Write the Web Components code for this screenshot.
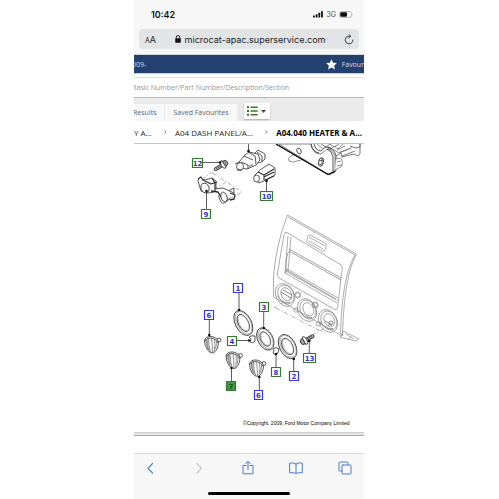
<!DOCTYPE html>
<html lang="en">
<head>
<meta charset="utf-8">
<title>Microcat</title>
<style>
    html, body {
        margin: 0;
        height: 100%;
        background: #fff;
    }
    body {
        font-family: "Open Sans", "Noto Sans", sans-serif;
        color: #222;
    }
</style>
</head>
<body>

<phone-screen>
    <status-bar slot="top" time="10:42" network="3G"></status-bar>
    <address-bar slot="top">microcat-apac.superservice.com</address-bar>

    <vehicle-header>009-<span slot="action">Favour</span></vehicle-header>
    <part-search hint="Basic Number/Part Number/Description/Section"></part-search>
    <result-tabs>
        <tab-button>Results</tab-button>
        <tab-button>Saved Favourites</tab-button>
    </result-tabs>
    <crumb-trail>
        <crumb-item>Y A...</crumb-item>
        <crumb-item>A04 DASH PANEL/A...</crumb-item>
        <crumb-item current>A04.040 HEATER &amp; A...</crumb-item>
    </crumb-trail>
    <parts-diagram></parts-diagram>

    <browser-toolbar slot="bottom"></browser-toolbar>
</phone-screen>

<script>
function define(name, template, setup) {
    customElements.define(name, class extends HTMLElement {
        constructor() {
            super()
            const shadow = this.attachShadow({ mode: "open" });
            shadow.innerHTML = template
        }

        connectedCallback() {
            if(setup) setup(this, this.shadowRoot)
        }
    })
}

define('phone-screen', /*html*/`
<style>
    :host {
        display: grid;
        grid-template-columns: 134fr 230fr 135fr;
        min-height: 100vh;
    }
    .phone {
        grid-column: 2;
        display: flex;
        flex-direction: column;
        overflow: hidden;
        background: #fff;
    }
    .top {
        background: #f7f7f8;
        border-bottom: 1px solid #d5d8dd;
    }
    main {
        flex: 1;
        display: flex;
        flex-direction: column;
    }
</style>
<div class="phone">
    <div class="top"><slot name="top"></slot></div>
    <main><slot></slot></main>
    <slot name="bottom"></slot>
</div>
`)

define('status-bar', /*html*/`
<style>
    :host {
        display: flex;
        align-items: center;
        height: 28px;
        padding: 0 10px 0 17px;
        gap: 3px;
        font-family: Inter, "Liberation Sans", sans-serif;
        color: #111;
    }
    time {
        flex: 1;
        font-size: 9px;
        font-weight: 600;
    }
    .net {
        font-size: 7px;
        color: #555;
    }
</style>
<time></time>
<svg width="10" height="7" viewBox="0 0 10 7" fill="#111">
    <rect x="0" y="4.5" width="1.8" height="2" rx=".5"/>
    <rect x="2.7" y="3.3" width="1.8" height="3.2" rx=".5"/>
    <rect x="5.4" y="1.8" width="1.8" height="4.7" rx=".5"/>
    <rect x="8.1" y="0" width="1.8" height="6.5" rx=".5"/>
</svg>
<span class="net"></span>
<svg width="15" height="7" viewBox="0 0 15 7">
    <rect x=".5" y=".5" width="12" height="6" rx="1.8" fill="none" stroke="#a5a5a5" stroke-width=".7"/>
    <rect x="1.3" y="1.2" width="6.7" height="4.6" rx="1" fill="#111"/>
    <path d="M13.5 2.5q1 1 0 2z" fill="#999"/>
</svg>
`, (el, root) => {
    root.querySelector('time').textContent = el.getAttribute('time')
    root.querySelector('.net').textContent = el.getAttribute('network')
})

define('address-bar', /*html*/`
<style>
    :host {
        display: flex;
        align-items: center;
        height: 20px;
        margin: 1px 5px 5px;
        padding: 0 5px 0 6px;
        border-radius: 4px;
        background: #e3e4e6;
        font-family: Inter, "Liberation Sans", sans-serif;
        color: #222;
    }
    button {
        border: 0;
        padding: 0;
        background: none;
        font: inherit;
        color: inherit;
        display: flex;
        align-items: baseline;
    }
    .size { font-size: 9px; }
    .size small { font-size: 7px; }
    .url {
        flex: 1;
        display: flex;
        justify-content: center;
        align-items: center;
        gap: 4px;
        font-size: 9px;
        white-space: nowrap;
    }
</style>
<button class="size" aria-label="Text size"><small>A</small>A</button>
<div class="url">
    <svg width="6" height="8" viewBox="0 0 6 8">
        <rect x=".2" y="3.2" width="5.6" height="4.5" rx=".8" fill="#111"/>
        <path d="M1.3 3.5V2.2a1.7 1.7 0 0 1 3.4 0v1.3" fill="none" stroke="#111" stroke-width=".9"/>
    </svg>
    <span><slot></slot></span>
</div>
<button aria-label="Reload">
    <svg width="10" height="11" viewBox="0 0 10 11" fill="none" stroke="#333" stroke-width=".9" stroke-linecap="round">
        <path d="M8.8 6A3.8 3.8 0 1 1 5 2.2h1.4M4.8.4l1.9 1.8-1.9 1.9"/>
    </svg>
</button>
`)

define('vehicle-header', /*html*/`
<style>
    :host {
        display: flex;
        align-items: center;
        height: 18px;
        background: #24406f;
        color: #d3dceb;
        font-size: 7px;
        border-bottom: 1px solid #c9ced6;
        white-space: nowrap;
    }
    .vehicle {
        flex: 1;
        margin-left: -2px;
    }
    a {
        display: flex;
        align-items: center;
        gap: 5px;
        color: inherit;
        text-decoration: none;
    }
</style>
<span class="vehicle"><slot></slot></span>
<a href="#favourites">
    <svg width="11" height="11" viewBox="0 0 11 11">
        <path d="M5.5.2l1.6 3.5 3.8.4-2.8 2.6.8 3.8-3.4-1.9-3.4 1.9.8-3.8L.1 4.1l3.8-.4z" fill="#fff"/>
    </svg>
    <slot name="action"></slot>
</a>
`)

define('part-search', /*html*/`
<style>
    :host {
        display: flex;
        height: 20px;
        padding-top: 3px;
        border-bottom: 1px solid #b4b4b4;
        background: #fff;
    }
    input {
        flex: 1;
        min-width: 0;
        border: 0;
        border-top: 1px solid #e2e2e2;
        padding: 0;
        margin-left: -2px;
        outline: 0;
        background: #fff;
        font: 7px "Open Sans", sans-serif;
    }
    input::placeholder {
        color: #959595;
        opacity: 1;
    }
</style>
<input type="text" aria-label="Search parts">
`, (el, root) => {
    root.querySelector('input').placeholder = el.getAttribute('hint')
})

define('result-tabs', /*html*/`
<style>
    :host {
        display: flex;
        align-items: flex-end;
        gap: 1px;
        height: 23px;
        background: #ebebec;
        overflow: hidden;
    }
    ::slotted(:first-child) { margin-left: -9px; }
    .list {
        display: flex;
        align-items: center;
        justify-content: center;
        gap: 3px;
        width: 26px;
        height: 16px;
        margin: 0 0 2px 6px;
        padding: 0;
        border: 0;
        border-radius: 1px;
        background: #fff;
        box-shadow: 0 1px 2px #aaa;
    }
</style>
<slot></slot>
<button class="list" aria-label="List view">
    <svg width="11" height="10" viewBox="0 0 11 10" fill="#3d7a22">
        <path d="M0 .3h2v2H0zM0 4h2v2H0zM0 7.700h2v2H0zM3.500.6h7.200V2H3.500zM3.500 4.300h7.200v1.400H3.500zM3.500 8h7.200v1.400H3.500z"/>
    </svg>
    <svg width="5" height="3" viewBox="0 0 5 3"><path d="M0 0h5L2.500 3z" fill="#444"/></svg>
</button>
`)

define('tab-button', /*html*/`
<style>
    :host { display: block; }
    button {
        height: 17px;
        padding: 0 8px;
        border: 0;
        background: #f8f8f8;
        color: #666;
        font: 7px "Open Sans", sans-serif;
        white-space: nowrap;
    }
</style>
<button><slot></slot></button>
`)

define('crumb-trail', /*html*/`
<style>
    :host {
        display: flex;
        align-items: center;
        justify-content: space-between;
        height: 22px;
        padding-right: 2px;
        background: #fff;
        border-bottom: 1px solid #c4c4c4;
    }
</style>
<slot></slot>
`)

define('crumb-item', /*html*/`
<style>
    :host {
        display: flex;
        align-items: center;
        gap: 12px;
        font-size: 8px;
        white-space: nowrap;
        color: #222;
    }
    :host([current]) {
        font-weight: 700;
        color: #000;
    }
    :host([current]) svg { display: none; }
    a {
        color: inherit;
        text-decoration: none;
    }
</style>
<a href="#section"><slot></slot></a>
<svg width="3" height="4" viewBox="0 0 3 4"><path d="M.6.4L2.200 2 .6 3.600" fill="none" stroke="#555" stroke-width=".7"/></svg>
`)

// number, left, top, width, colour and leader line of each callout
const callouts = [
    ['12', 192.5, 157.5, 10, 'green', 'M203 161.5H220'],
    ['9', 201.5, 208.5, 9, 'green', 'M206.5 208V190'],
    ['10', 260.5, 190.5, 12, 'green', 'M266.5 190V180'],
    ['1', 233.5, 282.5, 9, 'blue', 'M239 292V309'],
    ['3', 259.5, 301.5, 9, 'green', 'M263.7 311V327'],
    ['6', 204.5, 309.5, 9, 'blue', 'M209.3 319V334'],
    ['4', 227.5, 335.5, 9, 'green', 'M237 339.5H249'],
    ['7', 226.5, 380.5, 9, 'picked', 'M231.5 380V367'],
    ['8', 271.5, 366.5, 9, 'green', 'M276 366V353'],
    ['2', 289.5, 370.5, 9, 'blue', 'M293.7 370V358'],
    ['6', 254.5, 389.5, 8, 'blue', 'M259.3 389V376'],
    ['13', 303.5, 352.5, 12, 'green', 'M309.3 352V340']
]

const drawCallout = ([number, x, y, width, kind, leader]) => {
    const end = leader.match(/H(\d+)/)
    const [, sx, sy] = leader.match(/M([\d.]+) ([\d.]+)/)
    const tip = end ? [end[1], sy] : [sx, leader.match(/V([\d.]+)/)[1]]
    return `
    <a href="#part-${number}" class="${kind}">
        <path class="leader" d="${leader}"/>
        <circle cx="${tip[0]}" cy="${tip[1]}" r="1.3" fill="#111"/>
        <rect x="${x}" y="${y}" width="${width}" height="9"/>
        <text x="${x + width / 2}" y="${y + 7}">${number}</text>
    </a>`
}

const drawRing = (x, y, rx, ry) => `
    <g transform="translate(${x} ${y}) rotate(-28)" class="dark">
        <ellipse rx="${rx}" ry="${ry}" fill="#eee"/>
        <ellipse rx="${rx - 1.3}" ry="${ry - 1.2}" stroke="#777" stroke-width=".5" cx=".5"/>
        <ellipse rx="${rx - 3}" ry="${ry - 4.2}"/>
        <ellipse rx="${rx - 3.8}" ry="${ry - 5}" stroke="#777" stroke-width=".4" cx=".4"/>
    </g>`

const drawKnob = (x, y) => `
    <g transform="translate(${x} ${y})" class="dark">
        <circle cx="7.500" cy="-4" r="1.900"/>
        <path d="M4-5l2 0M5-1l1.500-1.500"/>
        <path d="M-7-4C-6-9 5-9 7-2 7 3 5 7 2 9Q-2 9-4 6-7 2-7-4z"/>
        <path d="M-6-4Q-6 2-3 6L-1 7Q-4 1-3-6z" fill="#bbb" stroke="none"/>
        <path d="M-7-3Q-4-7 0-6 5-5 6.500-1" fill="none"/>
        <path d="M-3-6Q-3 2-1 8M0-6Q1 2 1 8.500M-5-5Q-5 1-3 6M3-5Q4 1 2.500 8M5-3Q5 2 4 5" fill="none" stroke="#666" stroke-width=".7"/>
    </g>`

const drawScrew = (x, y, angle) => `
    <g transform="translate(${x} ${y}) rotate(${angle})" class="dark">
        <path d="M2-1.500H10.500L11.500 0l-1 1.500H2M4-1.500l1 3M6-1.500l1 3M8-1.500l1 3" fill="#bbb"/>
        <ellipse rx="2" ry="4.300" cx="1"/>
        <path d="M0-3L-3-2.500-4 0-3 2.500 0 3z" fill="#999"/>
    </g>`

const drawDial = (x, y) => `
    <g transform="translate(${x} ${y}) rotate(-28)">
        <ellipse rx="9" ry="12"/>
        <ellipse rx="7.500" ry="10" cx="1"/>
        <ellipse rx="5" ry="7" cx="1.500"/>
        <path d="M-7-3Q-7 7 1 9" stroke-width=".8"/>
    </g>`

define('parts-diagram', /*html*/`
<style>
    :host {
        display: flex;
        flex-direction: column;
        flex: 1;
        background: #fff;
    }
    svg {
        display: block;
        width: 100%;
        flex: 1;
        min-height: 0;
    }
    footer {
        height: 2px;
        margin-bottom: 17px;
        background: #e6e6e6;
        border-top: 1px solid #cfcfcf;
        border-bottom: 1px solid #aaa;
    }
    g, path, ellipse, circle { stroke-linejoin: round; }
    .light {
        fill: none;
        stroke: #8a8a8a;
        stroke-width: .7;
    }
    .dark {
        fill: #fff;
        stroke: #2d2d2d;
        stroke-width: .8;
    }
    .leader {
        fill: none;
        stroke: #333;
        stroke-width: .8;
    }
    .dash { stroke-dasharray: 4 2 1 2; }
    .callouts text {
        font: bold 7px "DejaVu Sans", sans-serif;
        text-anchor: middle;
        fill: #3535c8;
    }
    .callouts rect {
        fill: #fff;
        stroke-width: 1.2;
    }
    .green rect { stroke: #357a2c; }
    .blue rect { stroke: #3535e0; }
    .picked rect { fill: #459545; stroke: #2f7a2f; }
    .callouts .picked text { fill: #175a22; }
    .copyright {
        font: 5px "Liberation Sans", sans-serif;
        fill: #000;
    }
</style>
<svg viewBox="134 143 230 288" preserveAspectRatio="xMidYMin meet">
    <!-- heater housing -->
    <g class="dark">
        <path d="M301 151l-10 4q-4 2-2 5 3 2 8 0l12-3" stroke="#777"/>
        <path d="M311 143q1 10 10 10l6-5q5 0 8 7v16l-6 3L279 143z" stroke="#666"/>
        <path d="M276 143l52 30.500 8-4v-15q-2-7-8-8M333 171v-15q-1-6-6-8" fill="none"/>
        <path d="M276 143l52 30.500 7-3" fill="none" stroke="#111" stroke-width="1.300"/>
        <path d="M311 143q2 8 8 9M314 143q2 7 7 7 5-7 11-2" fill="none"/>
        <path d="M317 143l6 5 3-3 4 4 4-4 4 3 5-5" fill="none" stroke="#777"/>
        <path d="M321 143l5 3 4-3 4 3 5-3M337 149l8-4M340 151l11-4M333 148l6 4 13-5" fill="none" stroke="#666"/>
        <path d="M336 155l5-3 1 4 12-3 4 2 2-2V143M350 145l6 2 4-1V143M342 155l13-5" stroke="#555"/>
        <path d="M336 158l5-1q2 3 1 8l-7 4M337 161l4-1M337 165l5-1" stroke="#777"/>
        <ellipse cx="299" cy="150" rx="2" ry="3" transform="rotate(-25 299 150)"/>
        <ellipse cx="321" cy="161" rx="2.500" ry="4.500" transform="rotate(15 321 161)"/>
        <path d="M319 160l4-1M319 163l3 1M322 157v6" fill="none"/>
    </g>

    <!-- power sockets and bracket -->
    <g class="dark">
        <path d="M254 153l4-4 7 4v5l-5 4-5-2zM257 151l5 4v6"/>
        <path d="M239 161l6-7 4-3 9 2 2 6-4 5-9 4-7-1z"/>
        <path d="M244 155l9 4M248 151l7 4 1 8M241 161l7 3v4M250 164v2M252 163v2" fill="none"/>
        <ellipse cx="240" cy="165.500" rx="3.500" ry="3.800"/>
        <path d="M235 163l4-2M237 169l5 0"/>
        <path d="M255 174l5-5 9-6 6 4v7l-7 4-9 4-4-3z"/>
        <path d="M258 171l6 3 10-6M264 174v5M264 176l10-5M265 179l9-4" fill="none" stroke-width="1.100"/>
        <ellipse cx="256.500" cy="177.500" rx="3" ry="3.500"/>
        <path d="M199 177l6 2 7-2 4 3v8l10 3 8-4v5l-3 5-4 3q-5 5-7-1l-3-8-10 1-6-2-3-10z"/>
        <path d="M198 178l3-2 2 3 8 4 6-2M212 177l3 5v8" stroke-width="1.200"/>
        <ellipse cx="205" cy="187" rx="4" ry="5" transform="rotate(-25 205 187)"/>
        <path d="M215 188l8-1 11 5-1 5-8 2"/>
        <ellipse cx="224" cy="196" rx="3" ry="5" transform="rotate(-20 224 196)"/>
        <path d="M211 190l7 1 3 5M230 192l5 2-1 4-4 1" stroke-width="1.300"/>
    </g>
    <path class="leader" d="M248.500 143V151"/>
    <circle cx="248.500" cy="150" r="1.300"/>
    <path class="light dash" d="M213 171L202 178M213 172L242 191 229 198M226 181L217 187"/>

    <!-- centre fascia -->
    <g class="light">
        <path d="M287.500 214Q276 243 273.500 276V296L342 335M287.500 214L356.500 253Q344 275 342.500 335M288 216L355 254Q342 275 340.500 333"/>
        <path d="M341 335l2-5 16 8-3 2-16-4zM346 333l8 5M351 335l-3 4" />
        <path d="M287 231.500L341 264Q343 266 342 269L337.500 307Q337 310 334 308L279 277Q277 275 277.500 272L284 234Q285 230 287 231.500z"/>
        <path d="M288 235L285 272 337 302M291 236L288 270M285.500 270L337.500 299.500M285 272.500L287 268 338 297" />
        <path d="M289 248L341 277M289 250L341 279M289 251Q286 252 286 269L336 298" stroke-width=".8"/>
        <path d="M310 234L325 242Q327 243 326 246L325 249Q324 251 322 250L308 242Q306 241 307 238L308 235Q309 233 310 234zM309 236L325 245M309 240l14 8"/>
        ${drawDial(285, 294)}
        ${drawDial(307, 309)}
        ${drawDial(328, 320)}
        <circle cx="297.700" cy="294" r="3"/>
        <circle cx="297.700" cy="294" r="2.200"/>
        <circle cx="315.300" cy="304" r="3"/>
        <circle cx="315.300" cy="304" r="2.200"/>
        <circle cx="296" cy="309" r="2.200"/>
        <circle cx="318.500" cy="323" r="2.200"/>
        <path d="M281 291l10 6M283 289l9 5M325 320l7 4" stroke="#555"/>
        <circle cx="331" cy="322" r="2" stroke="#555"/>
        <path class="dash" d="M292 296L274 307M276 307L322 331M331 323L313 334"/>
    </g>

    <!-- control knobs, bezels and fixings -->
    ${drawRing(243.3, 322, 8, 13.5)}
    ${drawRing(265.3, 338, 7.5, 12)}
    ${drawRing(287.6, 345.5, 8, 13)}
    ${drawKnob(211.5, 343)}
    ${drawKnob(233, 358.500)}
    ${drawKnob(256.5, 366.500)}
    ${drawScrew(304, 340, -29)}
    ${drawScrew(224, 163, 148)}
    <g class="dark">
        <path d="M249 336q3-2 6-1v5q-2 3-5 1l1-3z"/>
        <path d="M273 348q3-3 6 0l-1 4q-3 3-5 0l1-2z"/>
    </g>

    <g class="callouts">${callouts.map(drawCallout).join('')}</g>
    <text class="copyright" x="243" y="424">©Copyright, 2009, Ford Motor Company Limited</text>
</svg>
<footer></footer>
`)

define('browser-toolbar', /*html*/`
<style>
    :host {
        display: flex;
        flex-direction: column;
        align-items: center;
        background: #f7f7f8;
        border-top: 1px solid #d9d9da;
    }
    nav {
        align-self: stretch;
        display: flex;
        justify-content: space-between;
        padding: 6px 12px 0 9px;
    }
    button {
        display: flex;
        align-items: center;
        border: 0;
        padding: 0;
        background: none;
        color: #4a7fc9;
    }
    button:disabled { color: #c6c6c8; }
    svg {
        fill: none;
        stroke: currentColor;
        stroke-width: 1;
        stroke-linecap: round;
        stroke-linejoin: round;
    }
    .home {
        width: 36%;
        height: 3px;
        margin: 16px 0 5px;
        border-radius: 2px;
        background: #000;
    }
</style>
<nav>
    <button aria-label="Back"><svg width="14" height="16" viewBox="0 0 14 16"><path d="M9.500 3.500L5 8.300l4.500 4.700" stroke-width="1.200"/></svg></button>
    <button aria-label="Forward" disabled><svg width="14" height="16" viewBox="0 0 14 16"><path d="M5 3.500l4.500 4.800L5 13" stroke-width="1.200"/></svg></button>
    <button aria-label="Share"><svg width="14" height="16" viewBox="0 0 14 16"><path d="M5 5.500H2v8.300h10V5.500H9M7 9.500V1.500M4.700 3.700L7 1.300l2.300 2.400"/></svg></button>
    <button aria-label="Bookmarks"><svg width="14" height="16" viewBox="0 0 14 16"><path d="M7 4Q4 2 .7 3.200V13Q4 12 7 13.500 10 12 13.300 13V3.200Q10 2 7 4zV13.500"/></svg></button>
    <button aria-label="Tabs"><svg width="14" height="16" viewBox="0 0 14 16"><rect x="4" y="5" width="9" height="9" rx="1"/><path d="M4 11H2Q1 11 1 10V3Q1 2 2 2H9Q10 2 10 3V5"/></svg></button>
</nav>
<div class="home"></div>
`)
</script>
</body>
</html>
